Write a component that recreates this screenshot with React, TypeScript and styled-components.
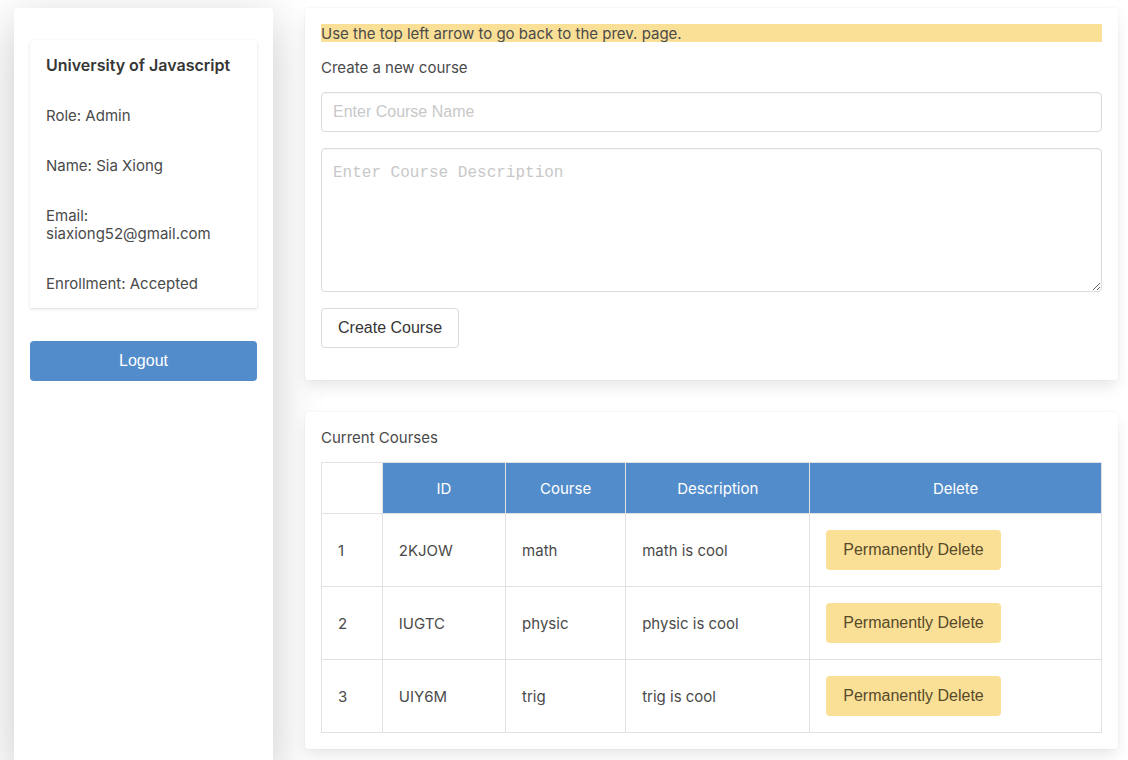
import React from "react";
import styled, { createGlobalStyle, css } from "styled-components";

const blue = "#528ccb";
const yellow = "#fae096";
const textColor = "#4a4a4a";
const uiFont = 'Inter, Roboto, sans-serif';
const controlFont = '"Liberation Sans", Arial, sans-serif';

const GlobalStyle = createGlobalStyle`
  *, *::before, *::after { box-sizing: border-box; }
  body {
    margin: 0;
    background: #fff;
    color: ${textColor};
    font: 400 15px/18px ${uiFont};
    overflow-x: hidden;
  }
`;

const Page = styled.div`
  display: grid;
  grid-template-columns: minmax(0, 259fr) minmax(0, 813fr);
  gap: 32px;
  min-height: 100vh;
  padding: 8px 10px 0 14px;
`;

const Sidebar = styled.aside`
  min-height: 100vh;
  padding: 32px 16px;
  border-radius: 4px;
  background: #fff;
  box-shadow: 0 14px 50px rgba(0, 0, 0, 0.22);
`;

const ProfileCard = styled.section`
  border-radius: 4px 4px 0 0;
  box-shadow: 0 1px 3px rgba(0, 0, 0, 0.14);
`;

const ProfileLine = styled.p`
  margin: 0;
  padding: 17px 16px 15px;
  overflow-wrap: anywhere;
`;

const SchoolName = styled.h1`
  margin: 0;
  padding: 16px;
  color: #363636;
  font-size: 16px;
  font-weight: 600;
  line-height: 18px;
`;

const Main = styled.main`
  display: flex;
  flex-direction: column;
  gap: 32px;
  position: relative;
`;

const Card = styled.section<{ $roomy?: boolean }>`
  padding: 16px 16px ${(p) => (p.$roomy ? 32 : 16)}px;
  border-radius: 4px;
  background: #fff;
  box-shadow: 0 8px 16px -2px rgba(10, 10, 10, 0.1), 0 0 0 1px rgba(10, 10, 10, 0.02);
`;

const Notice = styled.p`
  margin: 0 0 16px;
  padding-top: 2px;
  line-height: 16px;
  background: ${yellow};
`;

const CardTitle = styled.h2`
  margin: 0 0 16px;
  padding-top: 2px;
  font-size: 15px;
  font-weight: 400;
  line-height: 16px;
`;

const Form = styled.form`
  display: flex;
  flex-direction: column;
  align-items: flex-start;
  gap: 16px;
`;

const fieldStyle = css`
  display: block;
  width: 100%;
  border: 1px solid #dbdbdb;
  border-radius: 4px;
  background: #fff;
  color: #363636;
  font-size: 16px;
  box-shadow: inset 0 1px 2px rgba(10, 10, 10, 0.04);

  &::placeholder {
    color: #c8c8c8;
    opacity: 1;
  }
`;

const TextInput = styled.input`
  ${fieldStyle}
  height: 40px;
  padding: 0 11px;
  font-family: ${controlFont};
`;

const TextArea = styled.textarea`
  ${fieldStyle}
  height: 144px;
  padding: 12px 11px;
  line-height: 24px;
  font-family: "Courier New", "Liberation Mono", monospace;
  resize: vertical;
`;

const Button = styled.button<{ $tone?: "primary" | "warning" }>`
  height: 40px;
  padding: 0 16px;
  border: 1px solid #dbdbdb;
  border-radius: 4px;
  background: #fff;
  color: #363636;
  font: 400 16px/24px ${controlFont};
  white-space: nowrap;
  cursor: pointer;

  ${(p) =>
    p.$tone === "primary" &&
    css`
      border-color: transparent;
      background: ${blue} border-box;
      color: #fff;
    `}
  ${(p) =>
    p.$tone === "warning" &&
    css`
      border-color: transparent;
      background: ${yellow} border-box;
      color: #57492a;
    `}
`;

const LogoutButton = styled(Button)`
  width: 100%;
  margin-top: 33px;
`;

const Table = styled.table`
  width: 100%;
  border-collapse: collapse;
  table-layout: fixed;
`;

const Column = styled.col<{ $share: number }>`
  width: ${(p) => p.$share}%;
`;

const HeadCell = styled.th`
  height: 51px;
  padding: 17px 16px 15px;
  border: 1px solid #e1e1e1;
  background: ${blue};
  background-clip: padding-box;
  color: #fff;
  font-weight: 400;
  text-align: center;
`;

const CornerCell = styled.td`
  border: 1px solid #e1e1e1;
`;

const Cell = styled.td`
  height: 73px;
  padding: 17px 16px 15px;
  border: 1px solid #e1e1e1;
`;

const ActionCell = styled(Cell)`
  padding: 16px;
`;

const courses = [
  { id: "2KJOW", name: "math", description: "math is cool" },
  { id: "IUGTC", name: "physic", description: "physic is cool" },
  { id: "UIY6M", name: "trig", description: "trig is cool" },
];

export default function App() {
  return (
    <>
      <GlobalStyle />
      <Page>
        <Sidebar>
          <ProfileCard>
            <SchoolName>University of Javascript</SchoolName>
            <ProfileLine>Role: Admin</ProfileLine>
            <ProfileLine>Name: Sia Xiong</ProfileLine>
            <ProfileLine>Email: siaxiong52@gmail.com</ProfileLine>
            <ProfileLine>Enrollment: Accepted</ProfileLine>
          </ProfileCard>
          <LogoutButton type="button" $tone="primary">
            Logout
          </LogoutButton>
        </Sidebar>
        <Main>
          <Card $roomy>
            <Notice>Use the top left arrow to go back to the prev. page.</Notice>
            <CardTitle>Create a new course</CardTitle>
            <Form onSubmit={(e: React.FormEvent) => e.preventDefault()}>
              <TextInput aria-label="Course name" placeholder="Enter Course Name" />
              <TextArea aria-label="Course description" placeholder="Enter Course Description" />
              <Button type="submit">Create Course</Button>
            </Form>
          </Card>
          <Card>
            <CardTitle id="courses-title">Current Courses</CardTitle>
            <Table aria-labelledby="courses-title">
              <colgroup>
                <Column $share={7.8} />
                <Column $share={15.8} />
                <Column $share={15.4} />
                <Column $share={23.6} />
                <Column $share={37.4} />
              </colgroup>
              <thead>
                <tr>
                  <CornerCell />
                  <HeadCell scope="col">ID</HeadCell>
                  <HeadCell scope="col">Course</HeadCell>
                  <HeadCell scope="col">Description</HeadCell>
                  <HeadCell scope="col">Delete</HeadCell>
                </tr>
              </thead>
              <tbody>
                {courses.map((course, index) => (
                  <tr key={course.id}>
                    <Cell>{index + 1}</Cell>
                    <Cell>{course.id}</Cell>
                    <Cell>{course.name}</Cell>
                    <Cell>{course.description}</Cell>
                    <ActionCell>
                      <Button type="button" $tone="warning">
                        Permanently Delete
                      </Button>
                    </ActionCell>
                  </tr>
                ))}
              </tbody>
            </Table>
          </Card>
        </Main>
      </Page>
    </>
  );
}
